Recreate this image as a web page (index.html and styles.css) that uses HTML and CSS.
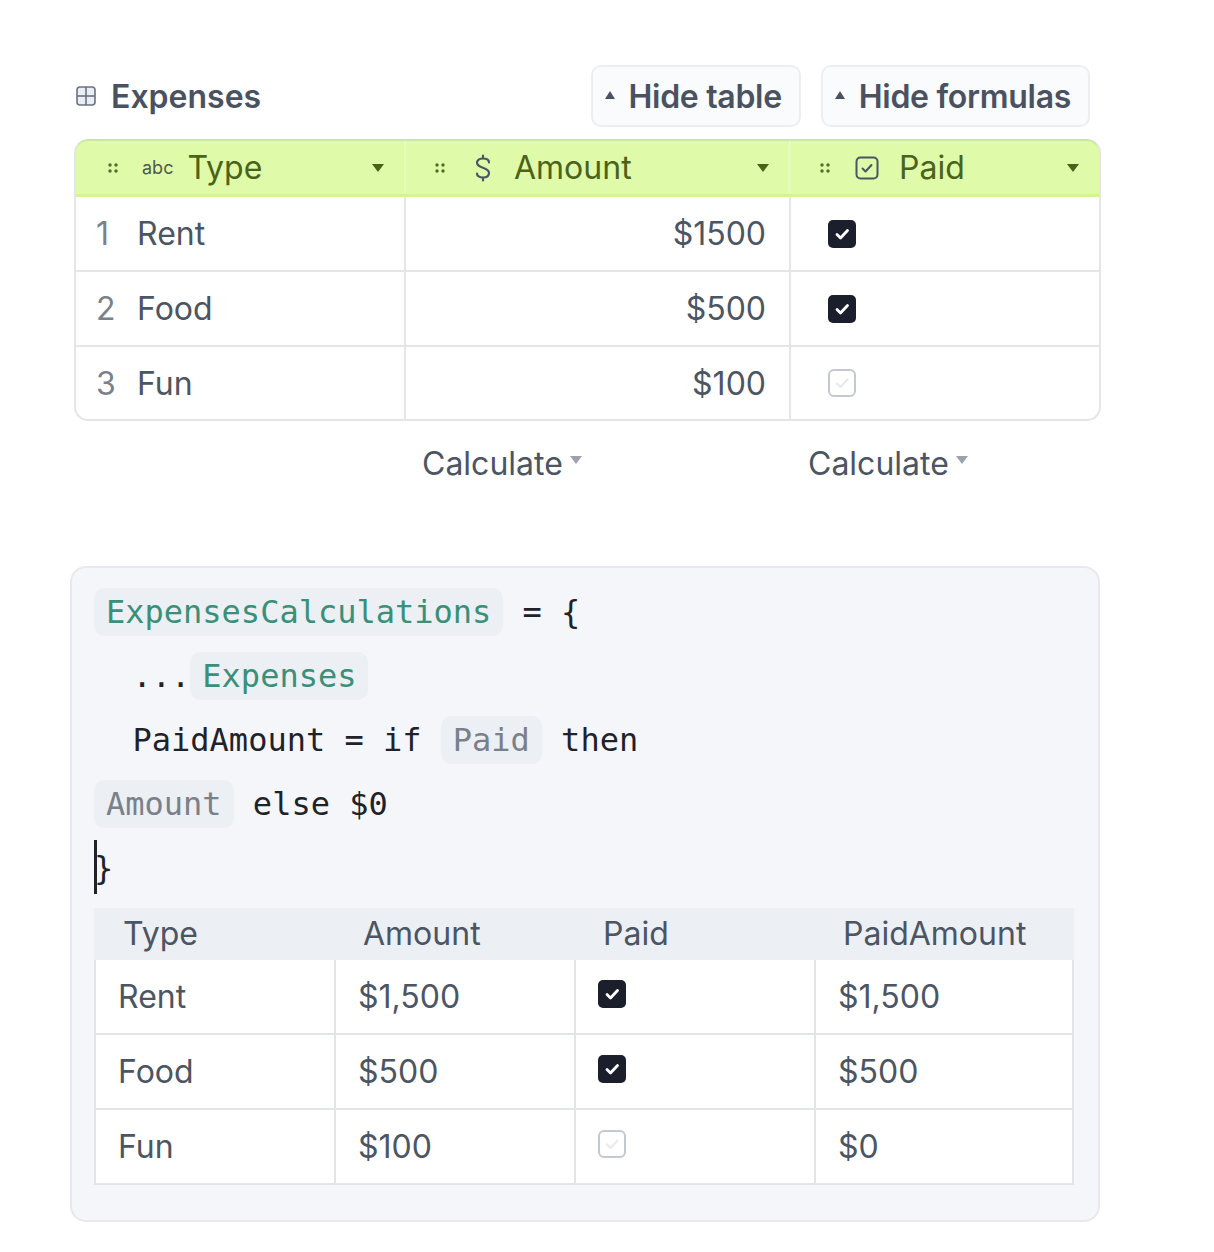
FILE: index.html
```html
<!DOCTYPE html>
<html>
<head>
<meta charset="utf-8">
<link rel="stylesheet" href="styles.css">
</head>
<body>
<div class="page">
  <div class="top">
    <div class="title-row">
      <div class="title">
        <svg class="grid-icon" width="20" height="20" viewBox="0 0 20 20"><rect x="1" y="1" width="18" height="18" rx="3" fill="#e9edf4" stroke="#6b7280" stroke-width="1.6"/><line x1="10" y1="1" x2="10" y2="19" stroke="#6b7280" stroke-width="1.6"/><line x1="1" y1="10" x2="19" y2="10" stroke="#6b7280" stroke-width="1.6"/></svg>
        <span>Expenses</span>
      </div>
      <div class="buttons">
        <button class="btn"><span class="up"></span>Hide table</button>
        <button class="btn"><span class="up"></span>Hide formulas</button>
      </div>
    </div>

    <div class="table">
      <div class="thead">
        <div class="th">
          <svg class="dots" width="10" height="10" viewBox="0 0 10 10"><circle cx="2" cy="2" r="1.7"/><circle cx="8" cy="2" r="1.7"/><circle cx="2" cy="8" r="1.7"/><circle cx="8" cy="8" r="1.7"/></svg>
          <span class="abc">abc</span>
          <span class="label">Type</span>
          <span class="caret"></span>
        </div>
        <div class="th">
          <svg class="dots" width="10" height="10" viewBox="0 0 10 10"><circle cx="2" cy="2" r="1.7"/><circle cx="8" cy="2" r="1.7"/><circle cx="2" cy="8" r="1.7"/><circle cx="8" cy="8" r="1.7"/></svg>
          <svg class="dollar" width="18" height="28" viewBox="0 0 18 28"><path d="M9 1.5V4.5M9 23.5V26.5M15 8.5C15 5.8 12.6 4.5 9 4.5C5.4 4.5 3 6.2 3 8.8C3 15 15 12.5 15 19C15 21.8 12.6 23.5 9 23.5C5.4 23.5 3 22 3 19.5" fill="none" stroke="#4b5563" stroke-width="2.2" stroke-linecap="round"/></svg>
          <span class="label">Amount</span>
          <span class="caret"></span>
        </div>
        <div class="th">
          <svg class="dots" width="10" height="10" viewBox="0 0 10 10"><circle cx="2" cy="2" r="1.7"/><circle cx="8" cy="2" r="1.7"/><circle cx="2" cy="8" r="1.7"/><circle cx="8" cy="8" r="1.7"/></svg>
          <svg class="hcheck" width="24" height="24" viewBox="0 0 24 24"><rect x="1.5" y="1.5" width="21" height="21" rx="4" fill="none" stroke="#4b5563" stroke-width="2"/><path d="M7.5 12.5L10.5 15.5L16.5 9" fill="none" stroke="#4b5563" stroke-width="2" stroke-linecap="round" stroke-linejoin="round"/></svg>
          <span class="label">Paid</span>
          <span class="caret"></span>
        </div>
      </div>
      <div class="tbody">
        <div class="row">
          <div class="td"><span class="num">1</span>Rent</div>
          <div class="td amt">$1500</div>
          <div class="td chk"><svg width="28" height="28" viewBox="0 0 28 28"><rect width="28" height="28" rx="5" fill="#1b1f2b"/><path d="M9 14.5L12.5 18L19.5 10.5" fill="none" stroke="#fff" stroke-width="2.8" stroke-linecap="round" stroke-linejoin="round"/></svg></div>
        </div>
        <div class="row">
          <div class="td"><span class="num">2</span>Food</div>
          <div class="td amt">$500</div>
          <div class="td chk"><svg width="28" height="28" viewBox="0 0 28 28"><rect width="28" height="28" rx="5" fill="#1b1f2b"/><path d="M9 14.5L12.5 18L19.5 10.5" fill="none" stroke="#fff" stroke-width="2.8" stroke-linecap="round" stroke-linejoin="round"/></svg></div>
        </div>
        <div class="row last">
          <div class="td"><span class="num">3</span>Fun</div>
          <div class="td amt">$100</div>
          <div class="td chk"><svg width="28" height="28" viewBox="0 0 28 28"><rect x="1" y="1" width="26" height="26" rx="5" fill="#fff" stroke="#c3c8d1" stroke-width="2"/><path d="M9 14.5L12.5 18L19.5 10.5" fill="none" stroke="#e9ebef" stroke-width="2.4" stroke-linecap="round" stroke-linejoin="round"/></svg></div>
        </div>
      </div>
    </div>

    <div class="calc-row">
      <div class="calc-cell"></div>
      <div class="calc-cell"><span class="calc">Calculate</span><span class="gcaret"></span></div>
      <div class="calc-cell"><span class="calc">Calculate</span><span class="gcaret"></span></div>
    </div>
  </div>

  <div class="code-box">
    <div class="code">
      <div class="line"><span class="pill green">ExpensesCalculations</span> = {</div>
      <div class="line">  ...<span class="pill green">Expenses</span></div>
      <div class="line">  PaidAmount = if <span class="pill gray">Paid</span> then</div>
      <div class="line"><span class="pill gray">Amount</span> else $0</div>
      <div class="line"><span class="cursor"></span>}</div>
    </div>

    <div class="result">
      <div class="rhead">
        <div class="rh">Type</div>
        <div class="rh">Amount</div>
        <div class="rh">Paid</div>
        <div class="rh">PaidAmount</div>
      </div>
      <div class="rrow">
        <div class="rc">Rent</div>
        <div class="rc">$1,500</div>
        <div class="rc chk2"><svg width="28" height="28" viewBox="0 0 28 28"><rect width="28" height="28" rx="5" fill="#1b1f2b"/><path d="M9 14.5L12.5 18L19.5 10.5" fill="none" stroke="#fff" stroke-width="2.8" stroke-linecap="round" stroke-linejoin="round"/></svg></div>
        <div class="rc">$1,500</div>
      </div>
      <div class="rrow">
        <div class="rc">Food</div>
        <div class="rc">$500</div>
        <div class="rc chk2"><svg width="28" height="28" viewBox="0 0 28 28"><rect width="28" height="28" rx="5" fill="#1b1f2b"/><path d="M9 14.5L12.5 18L19.5 10.5" fill="none" stroke="#fff" stroke-width="2.8" stroke-linecap="round" stroke-linejoin="round"/></svg></div>
        <div class="rc">$500</div>
      </div>
      <div class="rrow">
        <div class="rc">Fun</div>
        <div class="rc">$100</div>
        <div class="rc chk2"><svg width="28" height="28" viewBox="0 0 28 28"><rect x="1" y="1" width="26" height="26" rx="5" fill="#fff" stroke="#c3c8d1" stroke-width="2"/><path d="M9 14.5L12.5 18L19.5 10.5" fill="none" stroke="#e9ebef" stroke-width="2.4" stroke-linecap="round" stroke-linejoin="round"/></svg></div>
        <div class="rc">$0</div>
      </div>
    </div>
  </div>
</div>
</body>
</html>
```

FILE: styles.css
```css
* { box-sizing: border-box; }
html, body { margin: 0; padding: 0; background: #fff; }
body {
  font-family: Inter, "Noto Sans", sans-serif;
  color: #4b5563;
}
.page {
  margin-left: 70px;
  padding-top: 65px;
  width: 1032px;
}
.top { margin-left: 4px; width: 1027px; }

.title-row {
  display: flex;
  align-items: center;
  justify-content: space-between;
  height: 62px;
  padding-right: 11px;
}
.title {
  display: flex;
  align-items: center;
  gap: 15px;
  font-size: 32px;
  font-weight: 600;
  color: #4a5262;
}
.grid-icon { margin-left: 2px; }
.buttons { display: flex; gap: 20px; }
.btn {
  height: 62px;
  display: flex;
  align-items: center;
  gap: 14px;
  padding: 0 17px 0 12px;
  border: 2px solid #eceef2;
  border-radius: 10px;
  background: #fafbfc;
  font-family: Inter, sans-serif;
  font-size: 32px;
  font-weight: 600;
  letter-spacing: -0.3px;
  color: #4a5262;
}
.up {
  width: 0; height: 0;
  border-left: 5px solid transparent;
  border-right: 5px solid transparent;
  border-bottom: 8px solid #4a5262;
  margin-top: -2px;
}

.table {
  margin-top: 12px;
  border-radius: 14px;
  overflow: hidden;
  border: 2px solid #e5e5e5;
  border-top: 0;
}
.thead {
  display: grid;
  grid-template-columns: 330px 385px 1fr;
  background: #dffaa9;
  border-top: 2px solid #c9e79e;
  border-bottom: 3px solid #d2f68b;
  height: 58px;
  margin: 0 -2px;
  border-left: 2px solid #c9e79e;
  border-right: 2px solid #c9e79e;
  border-radius: 14px 14px 0 0;
}
.th {
  display: flex;
  align-items: center;
  padding-left: 29px;
  padding-right: 20px;
  border-right: 2px solid #e6fbbd;
}
.th:first-child { padding-left: 32px; }
.th:last-child { border-right: 0; }
.dots { fill: #556a2c; flex: none; }
.abc { font-size: 18px; color: #4f5a4a; margin-left: 24px; }
.dollar { margin-left: 29px; }
.hcheck { margin-left: 25px; }
.label { font-size: 32px; color: #4b6319; margin-left: 14px; }
.th:nth-child(2) .label { margin-left: 22px; }
.th:nth-child(3) .label { margin-left: 20px; }
.caret {
  margin-left: auto;
  width: 0; height: 0;
  border-left: 6px solid transparent;
  border-right: 6px solid transparent;
  border-top: 8px solid #4b6319;
}

.row {
  display: grid;
  grid-template-columns: 330px 385px 1fr;
  height: 75px;
  border-bottom: 2px solid #e5e5e5;
}
.row.last { border-bottom: 0; height: 72px; }
.td {
  display: flex;
  align-items: center;
  font-size: 32px;
  color: #4b5563;
  border-right: 2px solid #e5e5e5;
  padding-left: 20px;
}
.td:last-child { border-right: 0; }
.num { color: #7b818c; width: 41px; }
.amt { justify-content: flex-end; padding-right: 23px; }
.chk { padding-left: 37px; }
.chk svg { display: block; }

.calc-row {
  display: grid;
  grid-template-columns: 330px 386px 1fr;
  height: 84px;
  align-items: center;
}
.calc-cell { display: flex; align-items: center; padding-left: 18px; }
.calc { font-size: 32px; color: #4b5563; }
.gcaret {
  margin-left: 7px;
  margin-top: -6px;
  width: 0; height: 0;
  border-left: 6px solid transparent;
  border-right: 6px solid transparent;
  border-top: 8px solid #9ca1ab;
}

.code-box {
  margin-top: 61px;
  width: 1030px;
  background: #f5f6fa;
  border: 2px solid #e7e9ee;
  border-radius: 16px;
  padding: 12px 24px 35px 22px;
}
.code {
  font-family: "DejaVu Sans Mono", monospace;
  font-size: 32px;
  color: #1f2229;
}
.line { height: 64px; line-height: 64px; white-space: pre; }
.pill {
  display: inline-block;
  line-height: 48px;
  padding: 0 12px;
  border-radius: 10px;
  background: #eceff3;
}
.pill.green { color: #3a8f79; }
.pill.gray { color: #7a808a; }
.cursor {
  display: inline-block;
  width: 3px;
  height: 54px;
  background: #1f2229;
  vertical-align: middle;
  margin-right: -3px;
  margin-top: -6px;
}

.result { margin-top: 8px; }
.rhead, .rrow {
  display: grid;
  grid-template-columns: 240px 240px 240px 1fr;
}
.rhead { background: #eceff3; height: 52px; }
.rh { font-size: 32px; color: #4b5563; padding-left: 29px; line-height: 52px; }
.rrow {
  height: 75px;
  background: #fff;
  border-left: 2px solid #e3e4e6;
  border-right: 2px solid #e3e4e6;
  border-bottom: 2px solid #e3e4e6;
}
.rc {
  display: flex;
  align-items: center;
  font-size: 32px;
  color: #4b5563;
  padding-left: 22px;
  border-right: 2px solid #e3e4e6;
}
.rc:last-child { border-right: 0; }
.chk2 svg { margin-top: -6px; }
```
